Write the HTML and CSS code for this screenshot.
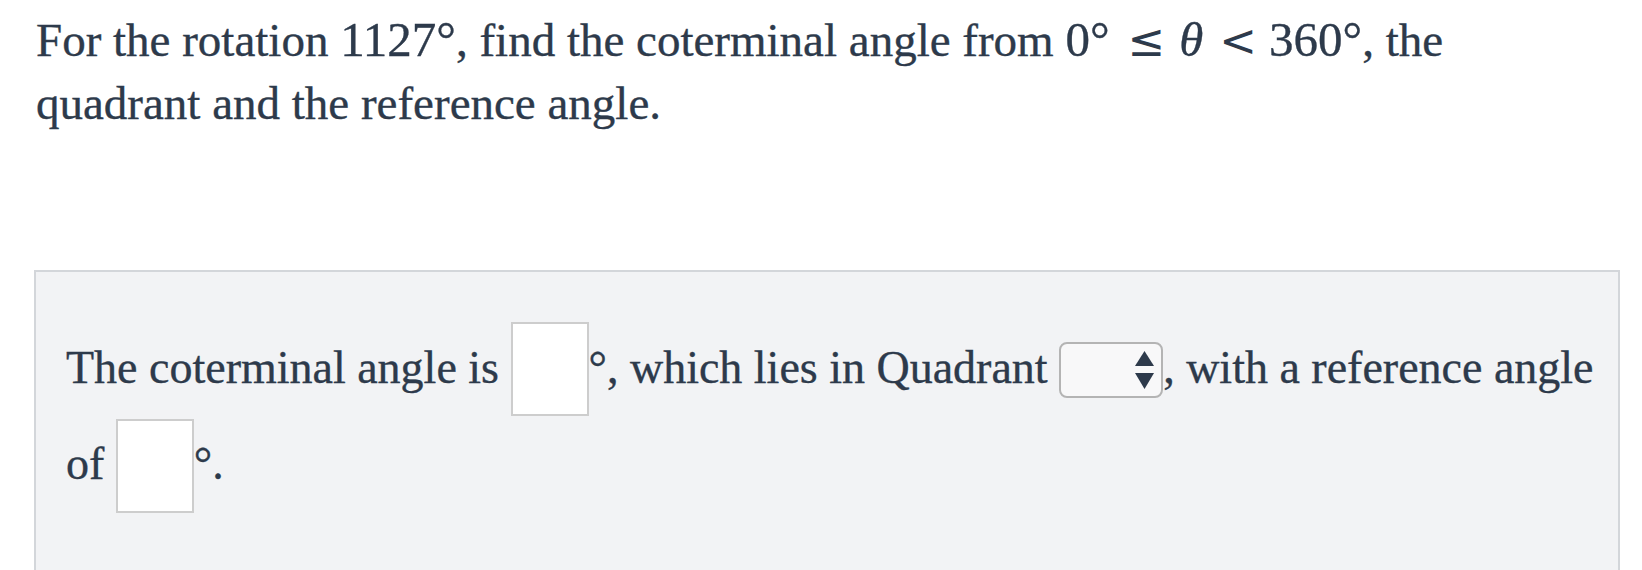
FILE: index.html
```html
<!DOCTYPE html>
<html lang="en">
<head>
<meta charset="utf-8">
<title>Coterminal angle</title>
<link rel="stylesheet" href="styles.css">
</head>
<body>
<main class="page">
  <p class="prompt">For the rotation <span class="math">1127°</span>, find the coterminal angle from <span class="math">0°<span class="rel rel-le">≤</span><span class="var">θ</span><span class="rel rel-lt">&lt;</span>360°</span>, the quadrant and the reference angle.</p>
  <section class="answer">
    <p class="answer-text">The coterminal angle is <input class="blank" type="text" aria-label="coterminal angle">°, which lies in Quadrant <span class="select-wrap"><select class="quadrant" aria-label="Quadrant"><option></option><option>I</option><option>II</option><option>III</option><option>IV</option></select><svg class="arrows" width="19" height="39" viewBox="0 0 19 39" aria-hidden="true"><polygon points="9.5,0 19,15 0,15"/><polygon points="0,22 19,22 9.5,38"/></svg></span>, with a reference angle of <input class="blank" type="text" aria-label="reference angle">°.</p>
  </section>
</main>
</body>
</html>
```

FILE: styles.css
```css
html, body {
  margin: 0;
  background: #ffffff;
}

body {
  color: #2d3a4b;
  font-family: "Liberation Serif", "Times New Roman", serif;
  -webkit-text-stroke: 0.35px #2d3a4b;
}

.page {
  padding: 8px 22px 0 34px;
}

.prompt {
  margin: 0 0 135px;
  padding: 0 24px 0 2px;
  font-size: 47px;
  line-height: 63px;
}

.math {
  font-size: 49px;
}

.var {
  font-style: italic;
}

.rel {
  font-family: "DejaVu Sans", sans-serif;
  font-size: 45px;
  -webkit-text-stroke: 0;
}

.rel-le {
  margin: 0 14px 0 18px;
}

.rel-lt {
  margin: 0 12px 0 16px;
}

.answer {
  background: #f2f3f5;
  border: 2px solid #d3d6da;
  padding: 51px 24px 80px 30px;
}

.answer-text {
  margin: 0;
  font-size: 46px;
  line-height: 89.5px;
}

.blank {
  box-sizing: border-box;
  width: 78px;
  height: 94px;
  padding: 0;
  border: 2px solid #cdcdcd;
  border-radius: 0;
  background: #ffffff;
  font: inherit;
  vertical-align: middle;
  margin: -3px 0 3px;
}

.select-wrap {
  display: inline-flex;
  position: relative;
  vertical-align: middle;
  margin: -2px 0 2px;
}

.quadrant {
  -webkit-appearance: none;
  appearance: none;
  box-sizing: border-box;
  width: 104px;
  height: 56px;
  margin: 0;
  padding: 0 12px;
  border: 2px solid #b4b4b4;
  border-radius: 8px;
  background: #f8f8f9;
  color: #2d3a4b;
  font-family: inherit;
  font-size: 24px;
}

.arrows {
  position: absolute;
  left: 76px;
  top: 9px;
  fill: #2d3a4b;
  pointer-events: none;
}
```
